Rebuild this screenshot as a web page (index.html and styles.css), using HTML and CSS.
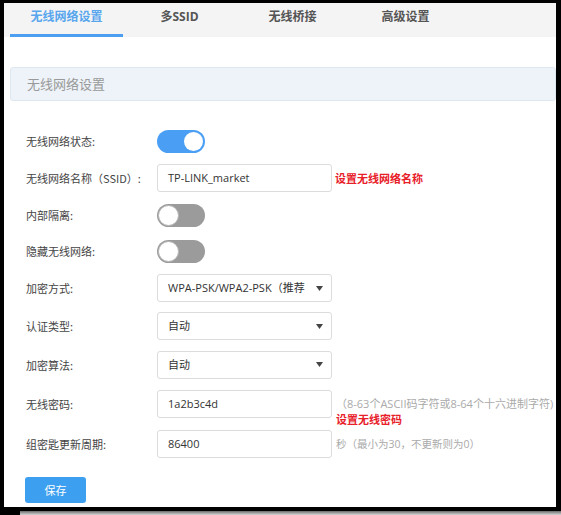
FILE: index.html
```html
<!DOCTYPE html>
<html lang="zh-CN">
<head>
<meta charset="utf-8">
<title>无线网络设置</title>
<link rel="stylesheet" href="styles.css">
</head>
<body>
<div class="window">
  <nav class="tabbar">
    <div class="tab active">无线网络设置</div>
    <div class="tab">多SSID</div>
    <div class="tab">无线桥接</div>
    <div class="tab">高级设置</div>
  </nav>
  <div class="section-title">无线网络设置</div>
  <div class="form">
    <div class="row row-t">
      <div class="label">无线网络状态:</div>
      <div class="toggle on"><span class="knob"></span></div>
    </div>
    <div class="row row-i">
      <div class="label">无线网络名称（SSID）:</div>
      <div class="field">TP-LINK_market</div>
      <div class="note-red">设置无线网络名称</div>
    </div>
    <div class="row row-t">
      <div class="label">内部隔离:</div>
      <div class="toggle"><span class="knob"></span></div>
    </div>
    <div class="row row-t">
      <div class="label">隐藏无线网络:</div>
      <div class="toggle"><span class="knob"></span></div>
    </div>
    <div class="row row-i">
      <div class="label">加密方式:</div>
      <div class="field select"><span class="sel-text">WPA-PSK/WPA2-PSK（推荐</span><svg class="caret" width="7" height="5" viewBox="0 0 7 5"><path d="M0 0H7L3.5 5Z" fill="#444"/></svg></div>
    </div>
    <div class="row row-i">
      <div class="label">认证类型:</div>
      <div class="field select"><span class="sel-text">自动</span><svg class="caret" width="7" height="5" viewBox="0 0 7 5"><path d="M0 0H7L3.5 5Z" fill="#444"/></svg></div>
    </div>
    <div class="row row-i7">
      <div class="label">加密算法:</div>
      <div class="field select"><span class="sel-text">自动</span><svg class="caret" width="7" height="5" viewBox="0 0 7 5"><path d="M0 0H7L3.5 5Z" fill="#444"/></svg></div>
    </div>
    <div class="row row-top">
      <div class="label tall">无线密码:</div>
      <div class="field push">1a2b3c4d</div>
      <div class="notes">
        <div class="hint hint-wide">（8-63个ASCII码字符或8-64个十六进制字符)</div>
        <div class="note-red under">设置无线密码</div>
      </div>
    </div>
    <div class="row row-top">
      <div class="label tall">组密匙更新周期:</div>
      <div class="field push">86400</div>
      <div class="notes">
        <div class="hint">秒（最小为30，不更新则为0）</div>
      </div>
    </div>
    <div class="actions">
      <button class="btn">保存</button>
    </div>
  </div>
</div>
<div class="bottom-edge"></div>
</body>
</html>
```
FILE: styles.css
```css
html, body {
  margin: 0;
  padding: 0;
}
body {
  background: #000;
  width: 561px;
  height: 515px;
  overflow: hidden;
  font-family: "Noto Sans CJK SC", "Open Sans", sans-serif;
}
.window {
  margin: 3px 5px 0 4px;
  height: 504px;
  background: #fff;
  overflow: hidden;
}
.tabbar {
  display: flex;
  background: #f4f4f4;
  padding-left: 6px;
  height: 34px;
}
.tab {
  width: 113px;
  text-align: center;
  font-family: "Open Sans", "Noto Sans CJK SC", sans-serif;
  font-size: 12px;
  font-weight: 700;
  color: #555;
  line-height: 28px;
  padding-bottom: 3px;
  border-bottom: 3px solid transparent;
}
.tab.active {
  color: #58a6ee;
  border-bottom-color: #4c9ff0;
}
.section-title {
  margin: 30px 0 0 6px;
  height: 32px;
  line-height: 32px;
  background: #edf3f8;
  border: 1px solid #dfe8f0;
  border-radius: 3px;
  padding-left: 16px;
  font-size: 13px;
  color: #999;
}
.form {
  padding: 22px 0 0 22px;
}
.row {
  display: flex;
  align-items: center;
}
.row-t { height: 36px; }
.row-i { height: 38px; }
.row-i7 { height: 39px; }
.row-top {
  height: 40px;
  align-items: flex-start;
}
.label {
  width: 131px;
  font-size: 11px;
  color: #444;
}
.label.tall {
  line-height: 40px;
}
.toggle {
  width: 48px;
  height: 23px;
  border-radius: 12px;
  background: #9b9b9b;
  display: flex;
  align-items: center;
  padding: 0 1px;
  box-sizing: border-box;
}
.toggle .knob {
  width: 21px;
  height: 21px;
  border-radius: 50%;
  background: #fff;
  box-sizing: border-box;
  border: 1px solid #b5b5b5;
}
.toggle.on {
  background: #4a9ff5;
  justify-content: flex-end;
  padding: 0 2px;
}
.toggle.on .knob {
  width: 19px;
  height: 19px;
  border: none;
}
.field {
  width: 175px;
  height: 28px;
  box-sizing: border-box;
  border: 1px solid #dcdcdc;
  border-radius: 3px;
  padding-left: 10px;
  font-family: "Open Sans", "Noto Sans CJK SC", sans-serif;
  font-size: 11px;
  color: #333;
  line-height: 26px;
  background: #fff;
}
.field.push {
  margin-top: 6px;
}
.select {
  display: flex;
  align-items: center;
  padding-right: 8px;
}
.sel-text {
  flex: 1;
  white-space: nowrap;
  overflow: hidden;
}
.caret {
  margin-left: 6px;
  flex: none;
}
.note-red {
  margin-left: 3px;
  font-size: 11px;
  font-weight: 700;
  color: #e8202a;
}
.notes {
  margin-top: 6px;
  margin-left: 4px;
}
.hint {
  line-height: 28px;
  font-family: "Open Sans", "Noto Sans CJK SC", sans-serif;
  font-size: 10.5px;
  color: #aaa;
  white-space: nowrap;
}
.hint-wide {
  font-size: 11px;
}
.note-red.under {
  margin-left: 0;
  line-height: 12px;
  margin-top: -5px;
}
.actions {
  margin: 12px 0 0 -1px;
}
.btn {
  width: 61px;
  height: 26px;
  border: none;
  border-radius: 3px;
  background: #3d9ff0;
  color: #fff;
  font-family: "Noto Sans CJK SC", sans-serif;
  font-size: 11px;
  padding: 0;
}
.bottom-edge {
  margin-top: 4px;
  margin-left: 20px;
  height: 4px;
  background: linear-gradient(#6a6a6a, #d6d6d6);
}
```
